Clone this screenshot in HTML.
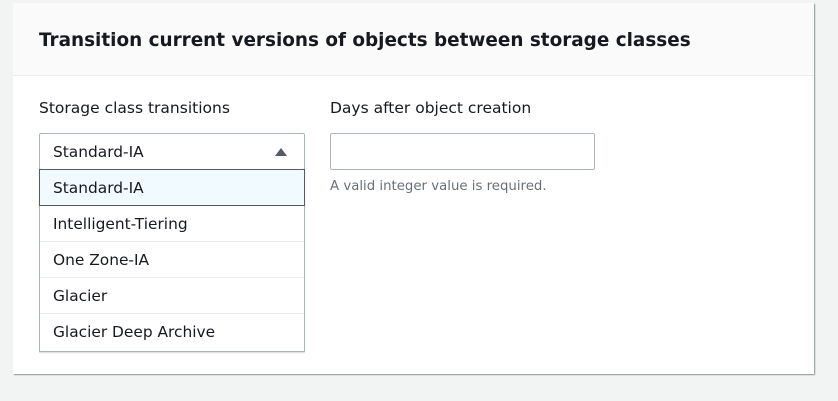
<!DOCTYPE html>
<html><head><style>
body{margin:0;width:838px;height:401px;background:#f2f3f3;font-family:"DejaVu Sans",sans-serif;position:relative;overflow:hidden;color:#16191f}
.panel{position:absolute;left:13px;top:3px;width:801px;height:371px;background:#fff;box-shadow:1px 1px 1px #879596}
.hdr{position:absolute;left:0;top:0;right:0;height:72px;background:#fafafa;border-bottom:1px solid #eaeded}
.title{position:absolute;left:26px;top:27px;font-size:18.4px;font-weight:bold}
.lbl{position:absolute;top:96px;font-size:15.5px;color:#16191f}
.sel{position:absolute;left:26px;top:130px;font-size:15.4px;line-height:37px;padding-left:13px;box-sizing:border-box;width:266px;height:37px;border:1px solid #aab7b8;border-radius:2px}
.tri{position:absolute;right:17px;top:14px;width:0;height:0;border-left:6px solid transparent;border-right:6px solid transparent;border-bottom:8px solid #545b64}
.list{position:absolute;left:26px;top:166px;width:266px;height:183px;border:1px solid #aab7b8;border-top:none;box-sizing:border-box;box-shadow:0 1px 1px rgba(0,0,0,.15)}
.opt{height:36px;line-height:37px;padding-left:13px;font-size:15.4px;border-bottom:1px solid #eaeded;box-sizing:border-box}
.opt.h{background:#f1faff;border:1px solid #545b64;margin:0 -1px;padding-left:13px;height:37px;line-height:36px}
.inp{position:absolute;left:317px;top:130px;width:265px;height:37px;border:1px solid #aab7b8;border-radius:2px;box-sizing:border-box}
.help{position:absolute;left:317px;top:176px;font-size:13.3px;color:#687078}
</style></head><body>
<div class="panel">
<div class="hdr"><div class="title">Transition current versions of objects between storage classes</div></div>
<div class="lbl" style="left:26px">Storage class transitions</div>
<div class="lbl" style="left:317px">Days after object creation</div>
<div class="sel">Standard-IA<div class="tri"></div></div>
<div class="list">
<div class="opt h">Standard-IA</div>
<div class="opt">Intelligent-Tiering</div>
<div class="opt">One Zone-IA</div>
<div class="opt">Glacier</div>
<div class="opt" style="border-bottom:none">Glacier Deep Archive</div>
</div>
<div class="inp"></div>
<div class="help">A valid integer value is required.</div>
</div>
</body></html>
